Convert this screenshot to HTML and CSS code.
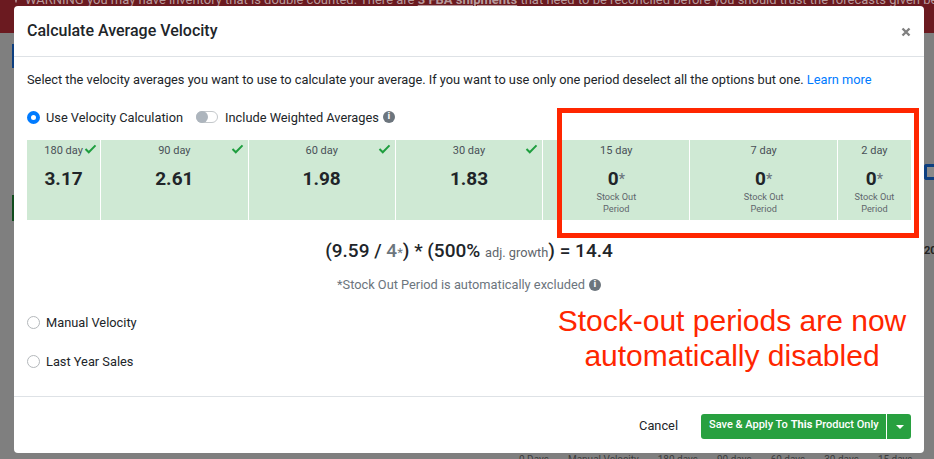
FILE: index.html
```html
<!DOCTYPE html>
<html lang="en">
<head>
  <meta charset="UTF-8">
  <title>Calculate Average Velocity</title>
  <link rel="stylesheet" href="styles.css">
</head>
<body>
  <!-- dimmed page behind the modal -->
  <div class="backdrop">
    <div class="warning-bar">
      <span class="warning-dot"></span>
      <span class="warning-icon"></span>
      <p class="warning-text">WARNING you may have inventory that is double counted. There are <u><b>3 FBA shipments</b></u> that need to be reconciled before you should trust the forecasts given below</p>
    </div>
    <span class="peek peek-blue"></span>
    <span class="peek peek-green"></span>
    <span class="peek peek-right"></span>
    <span class="peek-year">20</span>
    <p class="peek-row"><span>0 Days</span><span>Manual Velocity</span><span>180 days</span><span>90 days</span><span>60 days</span><span>30 days</span><span>15 days</span></p>
  </div>

  <div class="modal">
    <div class="modal-header">
      <h1>Calculate Average Velocity</h1>
      <svg class="close-icon" viewBox="0 0 10 10" width="10" height="10"><path d="M1.5 1.5l7 7M8.5 1.5l-7 7"/></svg>
    </div>

    <div class="modal-body">
      <p class="intro">Select the velocity averages you want to use to calculate your average. If you want to use only one period deselect all the options but one. <a href="#">Learn more</a></p>

      <div class="option-row">
        <span class="radio radio-on"></span>
        <span>Use Velocity Calculation</span>
        <span class="toggle"><span class="toggle-knob"></span></span>
        <span>Include Weighted Averages</span>
        <span class="info">i</span>
      </div>

      <div class="periods">
        <div class="period">
          <span class="period-name">180 day</span>
          <svg class="check check-tight" viewBox="0 0 14 11" width="13" height="10"><path d="M1.5 5.5l3.6 3.6 7.4-7.6"/></svg>
          <strong>3.17</strong>
        </div>
        <div class="period">
          <span class="period-name">90 day</span>
          <svg class="check" viewBox="0 0 14 11" width="13" height="10"><path d="M1.5 5.5l3.6 3.6 7.4-7.6"/></svg>
          <strong>2.61</strong>
        </div>
        <div class="period">
          <span class="period-name">60 day</span>
          <svg class="check" viewBox="0 0 14 11" width="13" height="10"><path d="M1.5 5.5l3.6 3.6 7.4-7.6"/></svg>
          <strong>1.98</strong>
        </div>
        <div class="period">
          <span class="period-name">30 day</span>
          <svg class="check" viewBox="0 0 14 11" width="13" height="10"><path d="M1.5 5.5l3.6 3.6 7.4-7.6"/></svg>
          <strong>1.83</strong>
        </div>
        <div class="period">
          <span class="period-name">15 day</span>
          <strong>0<i>*</i></strong>
          <small>Stock Out<br>Period</small>
        </div>
        <div class="period">
          <span class="period-name">7 day</span>
          <strong>0<i>*</i></strong>
          <small>Stock Out<br>Period</small>
        </div>
        <div class="period">
          <span class="period-name">2 day</span>
          <strong>0<i>*</i></strong>
          <small>Stock Out<br>Period</small>
        </div>
      </div>

      <p class="formula">(9.59 / <span class="muted">4</span><i>*</i>) * (500% <small>adj. growth</small>) = 14.4</p>
      <p class="excluded">*Stock Out Period is automatically excluded<span class="info">i</span></p>

      <div class="option-row option-manual"><span class="radio"></span><span>Manual Velocity</span></div>
      <div class="option-row option-last"><span class="radio"></span><span>Last Year Sales</span></div>
    </div>

    <div class="modal-footer">
      <span class="cancel">Cancel</span>
      <div class="save-group">
        <span class="save-main">Save &amp; Apply To <b>This</b> Product Only</span>
        <span class="save-caret"></span>
      </div>
    </div>
  </div>

  <!-- red markup drawn on top of the screenshot -->
  <div class="callout-box"></div>
  <p class="callout-text">Stock-out periods are now<br>automatically disabled</p>
</body>
</html>
```

FILE: styles.css
```css
* {
  box-sizing: border-box;
}

html, body {
  height: 100%;
}

body {
  margin: 0;
  overflow: hidden;
  background-color: #7f7f7f;
  color: #212529;
  font-family: Roboto, "Liberation Sans", sans-serif;
  font-size: 12.8px;
}

p, h1 {
  margin: 0;
}

.warning-bar {
  display: flex;
  height: 33px;
  background-color: #6b1a20;
  overflow: hidden;
}

.warning-dot {
  width: 3px;
  height: 12px;
  background-color: #1f5a2a;
  border-radius: 0 0 3px 0;
}

.warning-icon {
  width: 12px;
  height: 12px;
  margin: -9px 0 0 15px;
  border: 1px solid #b89a9c;
  border-radius: 50%;
}

.warning-text {
  margin: -8px 0 0 8px;
  color: #b89a9c;
  font-size: 13px;
  line-height: 16px;
  white-space: nowrap;
}

.peek {
  position: absolute;
}

.peek-blue {
  left: 12px;
  top: 44px;
  width: 2px;
  height: 24px;
  background-color: #0d3f80;
}

.peek-green {
  left: 12px;
  top: 195px;
  width: 2px;
  height: 26px;
  background-color: #114d1e;
}

.peek-right {
  left: 924px;
  top: 164px;
  width: 10px;
  height: 16px;
  border: 3px solid #0d3f80;
  border-right: 0;
  border-radius: 3px 0 0 3px;
  background-color: #8a8a8a;
}

.peek-year {
  position: absolute;
  left: 924px;
  top: 244px;
  color: #222;
  font-size: 11px;
  font-weight: 700;
}

.peek-row {
  position: absolute;
  left: 519px;
  top: 454px;
  display: flex;
  gap: 19px;
  color: #3c3c3c;
  font-size: 10px;
  line-height: 12px;
  white-space: nowrap;
}

.modal {
  position: absolute;
  left: 14px;
  top: 6px;
  width: 910px;
  height: 447px;
  display: flex;
  flex-direction: column;
  background-color: #fff;
  border-radius: 4px;
}

.modal-header {
  display: flex;
  align-items: center;
  justify-content: space-between;
  height: 51px;
  padding: 0 13px;
  border-bottom: 1px solid #dee2e6;
}

.modal-header h1 {
  font-size: 16px;
  font-weight: 500;
  margin-top: -1px;
}

.close-icon {
  fill: none;
  stroke: #808080;
  stroke-width: 2.4;
  margin-top: 1px;
}

.modal-body {
  flex: 1;
  padding: 14px 13px 0;
}

.intro {
  line-height: 17px;
}

.intro a {
  color: #007bff;
  text-decoration: none;
}

.option-row {
  display: flex;
  align-items: center;
  height: 18px;
  margin-top: 20px;
  color: #212529;
}

.radio {
  width: 13px;
  height: 13px;
  margin-right: 6px;
  border: 1px solid #b4b8bb;
  border-radius: 50%;
  background-color: #fff;
}

.radio-on {
  border: 4px solid #007bff;
}

.toggle {
  display: flex;
  align-items: center;
  width: 22px;
  height: 12px;
  margin: 0 7px 0 13px;
  border: 1px solid #c4c8cb;
  border-radius: 6px;
}

.toggle-knob {
  width: 12px;
  height: 12px;
  margin-left: -1px;
  border-radius: 50%;
  background-color: #adb5bd;
}

.info {
  display: inline-flex;
  align-items: center;
  justify-content: center;
  width: 12px;
  height: 12px;
  margin-left: 4px;
  border-radius: 50%;
  background-color: #6c757d;
  color: #fff;
  font-family: "DejaVu Sans", sans-serif;
  font-size: 8px;
  font-weight: 700;
  line-height: 1;
}

.periods {
  display: grid;
  grid-template-columns: 1fr 2fr 2fr 2fr 2fr 2fr 1fr;
  gap: 1px;
  height: 80px;
  margin-top: 14px;
}

.period {
  position: relative;
  display: flex;
  flex-direction: column;
  align-items: center;
  background-color: #cfe9d4;
  text-align: center;
}

.period-name {
  margin-top: 4px;
  color: #495057;
  font-size: 11px;
  line-height: 13px;
}

.period strong {
  margin-top: 11px;
  font-size: 19px;
  font-weight: 700;
  line-height: 22px;
  color: #212529;
}

.period strong i {
  color: #6c757d;
  font-size: 14px;
  font-weight: 500;
  font-style: normal;
  vertical-align: 1px;
}

.period small {
  margin-top: 1px;
  color: #5f666c;
  font-size: 9.2px;
  line-height: 12px;
}

.check {
  position: absolute;
  top: 4px;
  right: 4px;
  fill: none;
  stroke: #1e9e3e;
  stroke-width: 2.2;
}

.check-tight {
  right: 3px;
}

.formula {
  margin-top: 19px;
  font-size: 19px;
  font-weight: 500;
  line-height: 24px;
  text-align: center;
}

.formula .muted {
  color: #6c757d;
}

.formula i {
  color: #6c757d;
  font-size: 13px;
  font-style: normal;
  font-weight: 400;
}

.formula small {
  color: #5f666c;
  font-size: 12.8px;
  font-weight: 400;
}

.excluded {
  display: flex;
  align-items: center;
  justify-content: center;
  margin-top: 13px;
  color: #6c757d;
  font-size: 12.8px;
  line-height: 14px;
}

.option-manual {
  margin-top: 21px;
}

.option-last {
  margin-top: 21px;
}

.modal-footer {
  display: flex;
  align-items: center;
  justify-content: flex-end;
  height: 57px;
  padding: 2px 13px 0;
  border-top: 1px solid #dee2e6;
}

.cancel {
  margin: 0 23px 1px 0;
  font-size: 12.8px;
}

.save-group {
  display: flex;
  height: 25px;
  border-radius: 3px;
  background-color: #28a040;
  color: #fff;
}

.save-main {
  display: flex;
  align-items: center;
  gap: 3px;
  width: 186px;
  padding: 0 0 4px 8px;
  border-right: 1px solid #fff;
  font-size: 11px;
  font-weight: 500;
  white-space: nowrap;
}

.save-main b {
  font-weight: 700;
}

.save-caret {
  position: relative;
  width: 24px;
}

.save-caret::after {
  content: "";
  position: absolute;
  left: 9px;
  top: 11px;
  border-left: 4px solid transparent;
  border-right: 4px solid transparent;
  border-top: 4px solid #fff;
}

.callout-box {
  position: absolute;
  left: 557px;
  top: 108px;
  width: 362px;
  height: 130px;
  border: 5px solid #ff2600;
}

.callout-text {
  position: absolute;
  left: 532px;
  top: 303px;
  width: 400px;
  color: #ff2600;
  font-family: "Liberation Sans", sans-serif;
  font-size: 30px;
  line-height: 35px;
  text-align: center;
}
```
